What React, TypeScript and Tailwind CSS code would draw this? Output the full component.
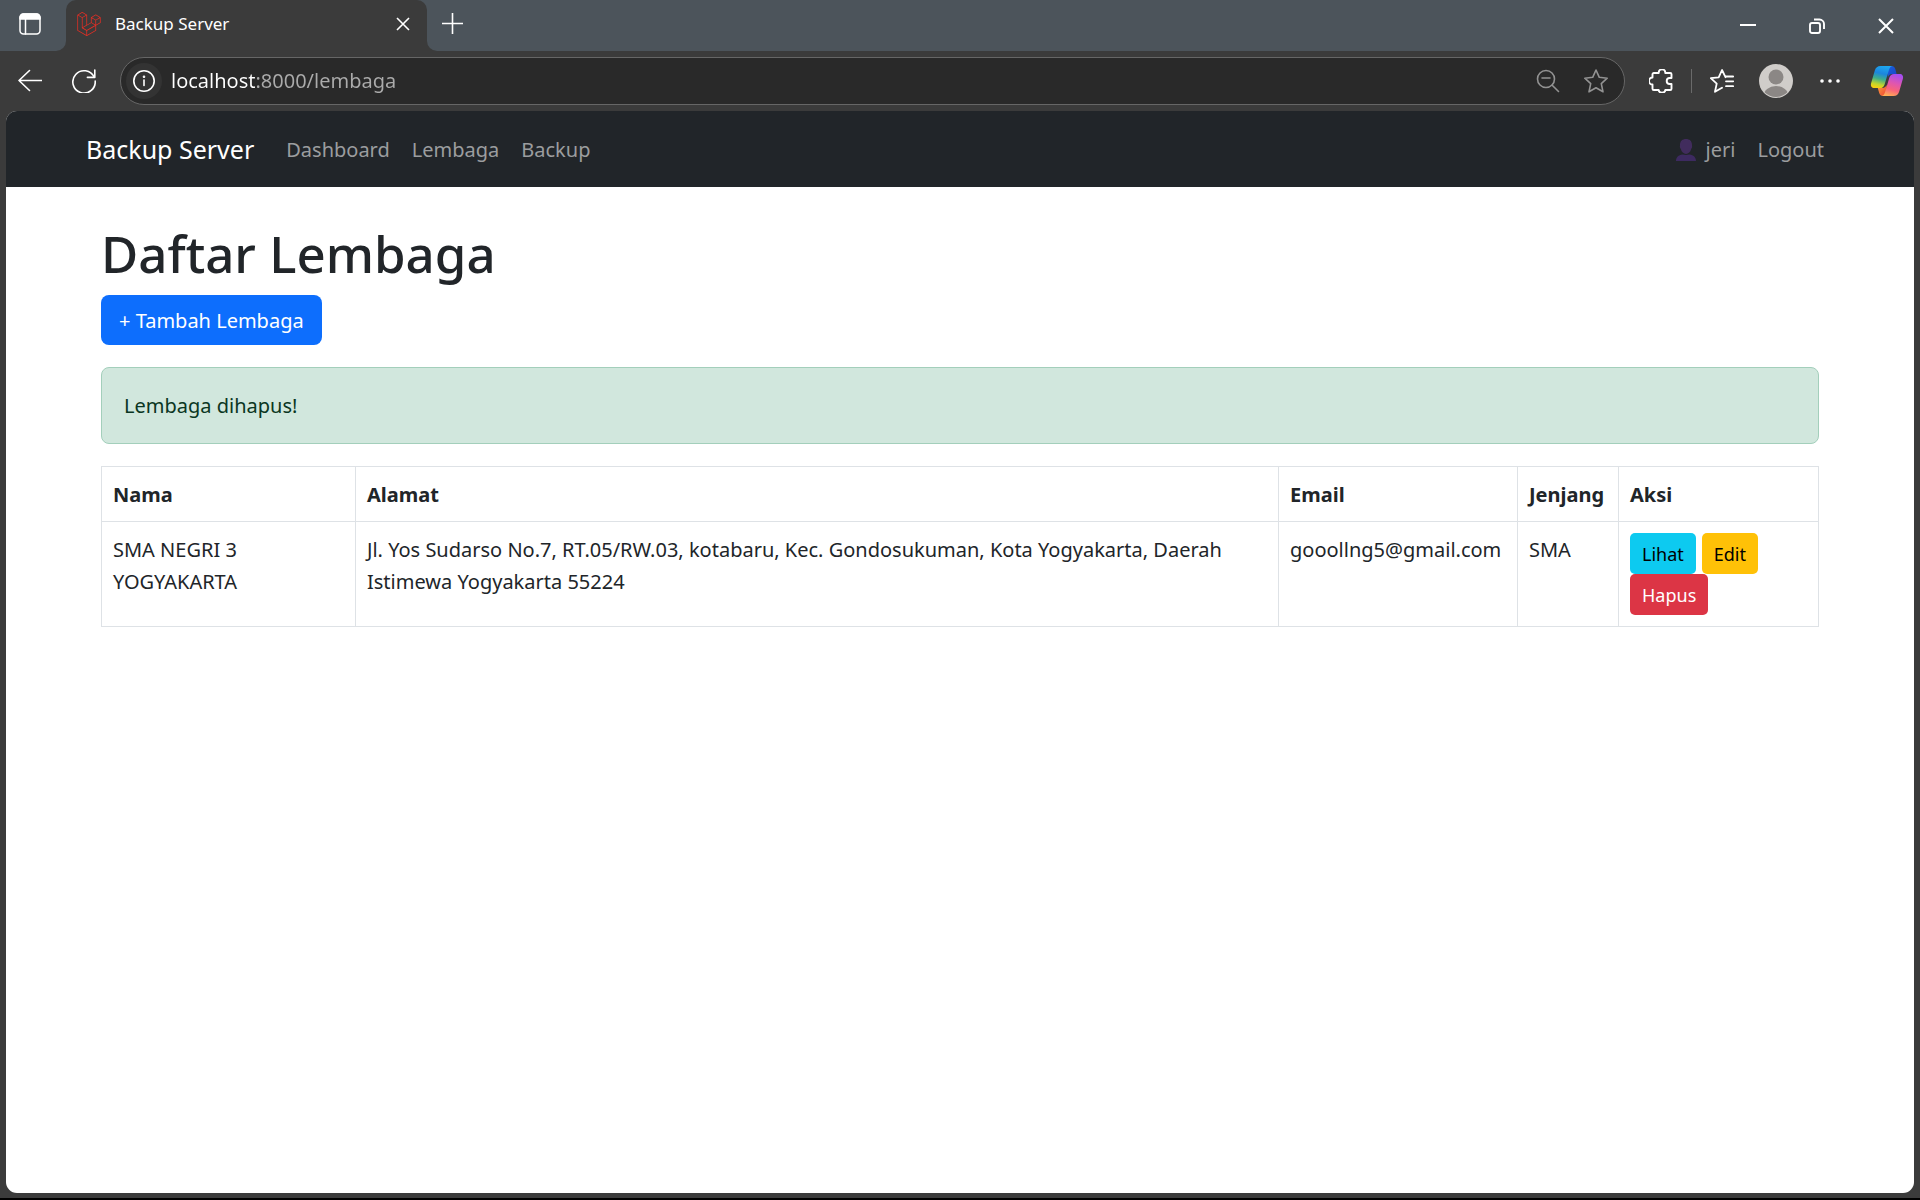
import type { ReactNode } from "react";
import { SiLaravel } from "react-icons/si";

function Stroke({ children, className = "size-6", width = 1.6 }: { children: ReactNode; className?: string; width?: number }) {
  return (
    <svg
      viewBox="0 0 24 24"
      className={className}
      fill="none"
      stroke="currentColor"
      strokeWidth={width}
      strokeLinecap="round"
      strokeLinejoin="round"
      aria-hidden="true"
    >
      {children}
    </svg>
  );
}

function CopilotLogo() {
  return (
    <svg viewBox="0 0 34 32" className="h-8 w-[34px]" aria-hidden="true">
      <defs>
        <linearGradient id="cpLeft" x1="0.6" y1="0" x2="0.35" y2="1">
          <stop offset="0" stopColor="#1ea7f0" />
          <stop offset="0.35" stopColor="#1c86dd" />
          <stop offset="0.6" stopColor="#3fae8a" />
          <stop offset="0.85" stopColor="#c3d52c" />
          <stop offset="1" stopColor="#f5cf12" />
        </linearGradient>
        <linearGradient id="cpRight" x1="0.65" y1="0" x2="0.35" y2="1">
          <stop offset="0" stopColor="#a54df0" />
          <stop offset="0.4" stopColor="#df56b0" />
          <stop offset="0.7" stopColor="#f8637c" />
          <stop offset="1" stopColor="#ffae54" />
        </linearGradient>
        <linearGradient id="cpTop" x1="0" y1="0" x2="1" y2="1">
          <stop offset="0" stopColor="#1a5fe0" />
          <stop offset="1" stopColor="#1746c4" />
        </linearGradient>
        <linearGradient id="cpBottom" x1="0" y1="0" x2="1" y2="1">
          <stop offset="0" stopColor="#fba03a" />
          <stop offset="1" stopColor="#ee4136" />
        </linearGradient>
      </defs>
      <path d="M17 1h4.500c2 0 3.200 1.200 3.800 3l1.300 5h-4.600c-2.200 0-3.500 1.300-4.100 3.200z" fill="url(#cpTop)" />
      <path d="M17 31h-4c-2 0-3.200-1.200-3.800-3l-1.400-5h4.500c2.200 0 3.800-1.300 4.400-3.200z" fill="url(#cpBottom)" />
      <path d="M10.500 1H23c-2.200 0-3.300 1.600-4 3.800l-4.400 14.600C13.800 21.800 12.300 23 10 23H4.500C1.600 23 .4 20.900 1.100 18.200L4.800 5.600C5.700 2.600 7.600 1 10.500 1z" fill="url(#cpLeft)" />
      <path d="M23.500 31H11c2.200 0 3.300-1.600 4-3.800l4.400-14.600C20.200 10.200 21.700 9 24 9h5.500c2.900 0 4.100 2.100 3.400 4.800l-3.700 12.600c-.9 3-2.800 4.600-5.700 4.600z" fill="url(#cpRight)" />
    </svg>
  );
}

function PersonGlyph() {
  return (
    <svg viewBox="0 0 20 22" className="h-[22px] w-5" aria-hidden="true">
      <path d="M10 0c3.500 0 6 2 6 6 0 1 .3 1.300 0 2.500-.3 1-.8 1-1 2-.5 2.300-2.600 4.500-5 4.500s-4.500-2.200-5-4.500c-.2-1-.7-1-1-2C3.700 7.300 4 7 4 6c0-4 2.500-6 6-6z" fill="#412c5d" />
      <path d="M0 22c0-4 2.500-6 6.500-6.600L10 16l3.500-.6C17.500 16 20 18 20 22z" fill="#3d2a60" />
    </svg>
  );
}

function TitleBar() {
  return (
    <header className="flex h-[51px] shrink-0 text-white">
      <div className="flex w-[66px] items-center rounded-br-[10px] bg-[#4c545b] pb-[3px] pl-[18px]">
        <button type="button" aria-label="Tab actions menu">
          <Stroke width={1.5}>
            <rect x="2" y="2" width="20" height="20" rx="3.500" />
            <path d="M2 7V5.500A3.500 3.500 0 0 1 5.500 2h13A3.500 3.500 0 0 1 22 5.500V7z" fill="currentColor" />
            <path d="M7.500 7v15" />
          </Stroke>
        </button>
      </div>
      <div className="w-[361px] bg-[#4c545b]">
        <div className="flex h-full items-center rounded-t-[10px] bg-[#3b3b3b] pr-[17px] pb-[3px] pl-[11px]">
          <SiLaravel className="size-6 text-[#e62e24]" aria-hidden="true" />
          <span className="ml-[14px] flex-1 text-[17px]">Backup Server</span>
          <button type="button" aria-label="Close tab">
            <svg viewBox="0 0 14 14" className="size-[14px]" stroke="currentColor" strokeWidth="1.600" aria-hidden="true">
              <path d="M1 1l12 12M13 1L1 13" />
            </svg>
          </button>
        </div>
      </div>
      <div className="flex flex-1 items-center rounded-bl-[10px] bg-[#4c545b] pl-[15px]">
        <button type="button" aria-label="New tab" className="mb-[5px]">
          <svg viewBox="0 0 21 21" className="size-[21px]" stroke="currentColor" strokeWidth="1.600" aria-hidden="true">
            <path d="M10.500 0v21M0 10.500h21" />
          </svg>
        </button>
        <div className="ml-auto flex">
          <button type="button" aria-label="Minimize" className="flex w-[69px] justify-center">
            <svg viewBox="0 0 16 16" className="size-4" stroke="currentColor" strokeWidth="2" aria-hidden="true">
              <path d="M0 7h16" />
            </svg>
          </button>
          <button type="button" aria-label="Restore" className="flex w-[69px] justify-center">
            <svg viewBox="0 0 16 16" className="size-4" fill="none" stroke="currentColor" strokeWidth="1.900" aria-hidden="true">
              <rect x="1" y="5" width="10" height="10" rx="2" />
              <path d="M5 1.500h5.500a4.500 4.500 0 0 1 4.500 4.500V11" />
            </svg>
          </button>
          <button type="button" aria-label="Close window" className="flex w-[69px] justify-center">
            <svg viewBox="0 0 16 16" className="size-4" stroke="currentColor" strokeWidth="2" aria-hidden="true">
              <path d="M1 1l14 14M15 1L1 15" />
            </svg>
          </button>
        </div>
      </div>
    </header>
  );
}

const toolButton = "flex h-12 w-[54px] shrink-0 items-center justify-center";

function Toolbar() {
  return (
    <div className="flex h-[60px] shrink-0 items-center pr-[6px] pl-[3px] text-white">
      <button type="button" aria-label="Back" className={toolButton}>
        <Stroke>
          <path d="M23.500 11.500H1M11.500 1.500L1 11.500l10.500 10" />
        </Stroke>
      </button>
      <button type="button" aria-label="Refresh" className={toolButton}>
        <Stroke>
          <path d="M22.200 8.200A11.200 11.200 0 1 0 23.200 12" />
          <path d="M22.800 1v7.400h-7.400" />
        </Stroke>
      </button>
      <div className="mx-[9px] flex h-12 flex-1 items-center rounded-full border border-[#666] bg-[#292929] pr-4 pl-[5px]">
        <button type="button" aria-label="View site information" className="flex size-9 items-center justify-center rounded-full bg-[#333]">
          <Stroke>
            <circle cx="12" cy="12" r="10.200" />
            <path d="M12 11v5.500" />
            <circle cx="12" cy="7.700" r=".5" fill="currentColor" />
          </Stroke>
        </button>
        <input
          type="text"
          aria-label="Address"
          defaultValue="localhost:8000/lembaga"
          className="ml-[9px] min-w-0 flex-1 bg-linear-to-r from-white from-[84px] to-[#ababab] to-[84px] bg-clip-text text-[20px] text-transparent outline-none"
        />
        <button type="button" aria-label="Zoom out" className="text-[#929292]">
          <Stroke>
            <circle cx="10" cy="10" r="8.500" />
            <path d="M6 9h8M16.200 16.200L22.500 22.500" />
          </Stroke>
        </button>
        <button type="button" aria-label="Add to favorites" className="ml-6 text-[#929292]">
          <Stroke>
            <path d="M12 1l3.300 7.300 7.900.9-5.900 5.400 1.700 8.200L12 18.800l-7 4 1.700-8.200L.8 9.200l7.900-.9z" />
          </Stroke>
        </button>
      </div>
      <button type="button" aria-label="Extensions" className={toolButton}>
        <Stroke width={1.9}>
          <path d="M4.800 4h4.900v-.4a3.300 3.300 0 0 1 6.600 0V4h4.900a1.300 1.300 0 0 1 1.300 1.300V9h-1.800a3 3 0 0 0 0 6h1.800v4.700a1.300 1.300 0 0 1-1.300 1.300h-4.900a3.300 2.600 0 0 1-6.600 0H4.800a1.300 1.300 0 0 1-1.300-1.300v-4.200a3.500 3.500 0 0 1 0-7V5.300A1.300 1.300 0 0 1 4.800 4z" />
        </Stroke>
      </button>
      <div className="mx-[3px] h-6 w-px bg-[#6a6a6a]" />
      <button type="button" aria-label="Favorites" className={toolButton}>
        <Stroke width={1.8}>
          <path d="M15.500 8.200L12 1 8.700 8.300.8 9.200l5.900 5.400L5 22.800l7-4M16 7.500h7.200M16 12.300h7.200M16 17.200h7.200" />
        </Stroke>
      </button>
      <button type="button" aria-label="Profile" className={toolButton}>
        <svg viewBox="0 0 34 34" className="size-[34px]" aria-hidden="true">
          <clipPath id="avatarClip">
            <circle cx="17" cy="17" r="16" />
          </clipPath>
          <circle cx="17" cy="17" r="17" fill="#d0cdca" />
          <g fill="#8b8785" clipPath="url(#avatarClip)">
            <circle cx="17" cy="13" r="7.500" />
            <ellipse cx="17" cy="32" rx="12.500" ry="10" />
          </g>
        </svg>
      </button>
      <button type="button" aria-label="Settings and more" className={toolButton}>
        <svg viewBox="0 0 20 4" className="h-1 w-5" fill="currentColor" aria-hidden="true">
          <circle cx="2" cy="2" r="1.800" />
          <circle cx="10" cy="2" r="1.800" />
          <circle cx="18" cy="2" r="1.800" />
        </svg>
      </button>
      <button type="button" aria-label="Copilot" className="ml-[3px] flex h-12 w-[54px] shrink-0 items-center justify-center">
        <CopilotLogo />
      </button>
    </div>
  );
}

function Navbar() {
  return (
    <nav className="flex h-[76px] items-center bg-[#212529] px-20 pt-[2px] text-[20px] text-[#9b9d9f]">
      <a href="#" className="mr-8 text-[25px] text-white">Backup Server</a>
      <div className="flex gap-[22px]">
        <a href="#">Dashboard</a>
        <a href="#">Lembaga</a>
        <a href="#">Backup</a>
      </div>
      <div className="mr-[10px] ml-auto flex gap-[22px]">
        <span className="flex items-center gap-[10px]">
          <PersonGlyph />
          jeri
        </span>
        <a href="#">Logout</a>
      </div>
    </nav>
  );
}

interface Lembaga {
  nama: string;
  alamat: string;
  email: string;
  jenjang: string;
}

const rows: Lembaga[] = [
  {
    nama: "SMA NEGRI 3 YOGYAKARTA",
    alamat: "Jl. Yos Sudarso No.7, RT.05/RW.03, kotabaru, Kec. Gondosukuman, Kota Yogyakarta, Daerah Istimewa Yogyakarta 55224",
    email: "gooollng5@gmail.com",
    jenjang: "SMA",
  },
];

const cell = "border border-[#dee2e6] px-[11px] pt-3 pb-[10px] text-left align-top";

function LembagaTable() {
  return (
    <table className="mt-[22px] w-full table-fixed border-collapse text-[20px] leading-8">
      <thead>
        <tr>
          <th className={`${cell} w-[254px]`}>Nama</th>
          <th className={cell}>Alamat</th>
          <th className={`${cell} w-[239px]`}>Email</th>
          <th className={`${cell} w-[101px]`}>Jenjang</th>
          <th className={`${cell} w-[200px]`}>Aksi</th>
        </tr>
      </thead>
      <tbody>
        {rows.map((row) => (
          <tr key={row.email}>
            <td className={cell}>{row.nama}</td>
            <td className={cell}>{row.alamat}</td>
            <td className={cell}>{row.email}</td>
            <td className={cell}>{row.jenjang}</td>
            <td className="border border-[#dee2e6] p-[11px] align-top">
              <div className="flex gap-[6px] text-[18px] text-black">
                <a href="#" className="flex h-[41px] items-center rounded-[5px] bg-[#0dcaf0] px-3">Lihat</a>
                <a href="#" className="flex h-[41px] items-center rounded-[5px] bg-[#ffc107] px-3">Edit</a>
              </div>
              <button type="button" className="flex h-[41px] items-center rounded-[5px] bg-[#dc3545] px-3 text-[18px] text-white">
                Hapus
              </button>
            </td>
          </tr>
        ))}
      </tbody>
    </table>
  );
}

export default function App() {
  return (
    <div className="flex min-h-screen flex-col border-b-2 border-black bg-[#3b3b3b] font-['Noto_Sans','Open_Sans',sans-serif]">
      <TitleBar />
      <Toolbar />
      <div className="mx-[6px] mb-[5px] flex-1 overflow-hidden rounded-[11px] bg-white text-[#212529]">
        <Navbar />
        <main className="px-[95px] pt-[34px]">
          <h1 className="text-[51px] leading-[64px] font-medium">Daftar Lembaga</h1>
          <a href="#" className="mt-[10px] inline-flex h-[50px] items-center rounded-lg bg-[#0d6efd] px-[18px] pt-px text-[20px] text-white">
            + Tambah Lembaga
          </a>
          <div role="alert" className="mt-[22px] flex h-[77px] items-center rounded-lg border border-[#a3cfbb] bg-[#d1e7dd] px-[22px] pt-px text-[20px] text-[#0a3622]">
            Lembaga dihapus!
          </div>
          <LembagaTable />
        </main>
      </div>
    </div>
  );
}
